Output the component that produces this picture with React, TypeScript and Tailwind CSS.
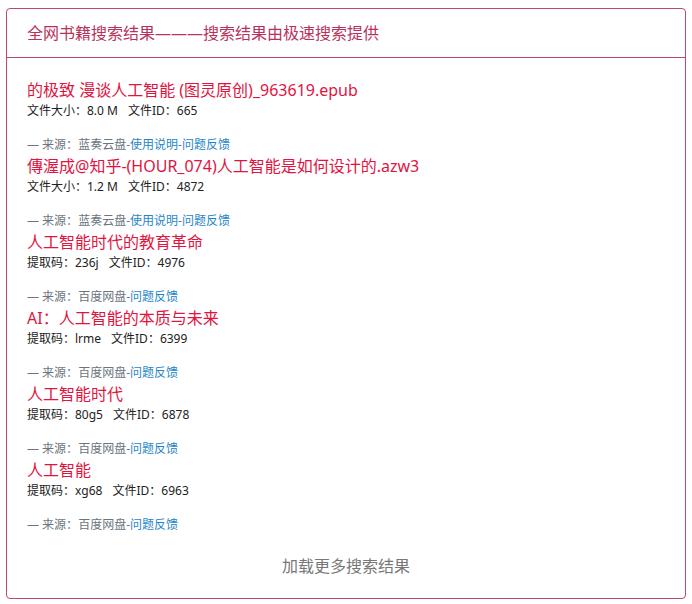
import React from "react";

type Item = {
  title: string;
  meta: [string, string];
  source: string;
  links: string[];
};

const items: Item[] = [
  {
    title: "的极致 漫谈人工智能 (图灵原创)_963619.epub",
    meta: ["文件大小：8.0 M", "文件ID：665"],
    source: "蓝奏云盘",
    links: ["使用说明", "问题反馈"],
  },
  {
    title: "傳渥成@知乎-(HOUR_074)人工智能是如何设计的.azw3",
    meta: ["文件大小：1.2 M", "文件ID：4872"],
    source: "蓝奏云盘",
    links: ["使用说明", "问题反馈"],
  },
  {
    title: "人工智能时代的教育革命",
    meta: ["提取码：236j", "文件ID：4976"],
    source: "百度网盘",
    links: ["问题反馈"],
  },
  {
    title: "AI：人工智能的本质与未来",
    meta: ["提取码：lrme", "文件ID：6399"],
    source: "百度网盘",
    links: ["问题反馈"],
  },
  {
    title: "人工智能时代",
    meta: ["提取码：80g5", "文件ID：6878"],
    source: "百度网盘",
    links: ["问题反馈"],
  },
  {
    title: "人工智能",
    meta: ["提取码：xg68", "文件ID：6963"],
    source: "百度网盘",
    links: ["问题反馈"],
  },
];

export default function App() {
  return (
    <div
      className="w-[692px] h-[604px] bg-white pt-[8px] px-[6px]"
      style={{ fontFamily: '"Segoe UI", "Noto Sans", "Noto Sans CJK SC", sans-serif' }}
    >
      <div className="border border-[#b84a6c] rounded-[4px] h-[591px] flex flex-col">
        <div className="px-[20px] py-[12px] border-b border-[#b84a6c] text-[16px] leading-[24px] text-[#b8325c]">
          全网书籍搜索结果———搜索结果由极速搜索提供
        </div>
        <div className="px-[20px] pt-[20px] pb-[20px] flex flex-col">
          {items.map((it, i) => (
            <div key={i} className="flex flex-col">
              <div className="text-[16px] leading-[24px] text-[#e0143f]">{it.title}</div>
              <div className="text-[12px] leading-[18px] text-[#222] flex gap-[10px]">
                <span>{it.meta[0]}</span>
                <span>{it.meta[1]}</span>
              </div>
              <div className="mt-[16px] text-[12px] leading-[18px] text-[#6c757d]">
                — 来源：{it.source}
                {it.links.map((l, j) => (
                  <React.Fragment key={j}>
                    -<span className="text-[#1f86c8]">{l}</span>
                  </React.Fragment>
                ))}
              </div>
            </div>
          ))}
          <div className="mt-[20px] text-center text-[16px] leading-[24px] text-[#777]">
            加载更多搜索结果
          </div>
        </div>
      </div>
    </div>
  );
}
